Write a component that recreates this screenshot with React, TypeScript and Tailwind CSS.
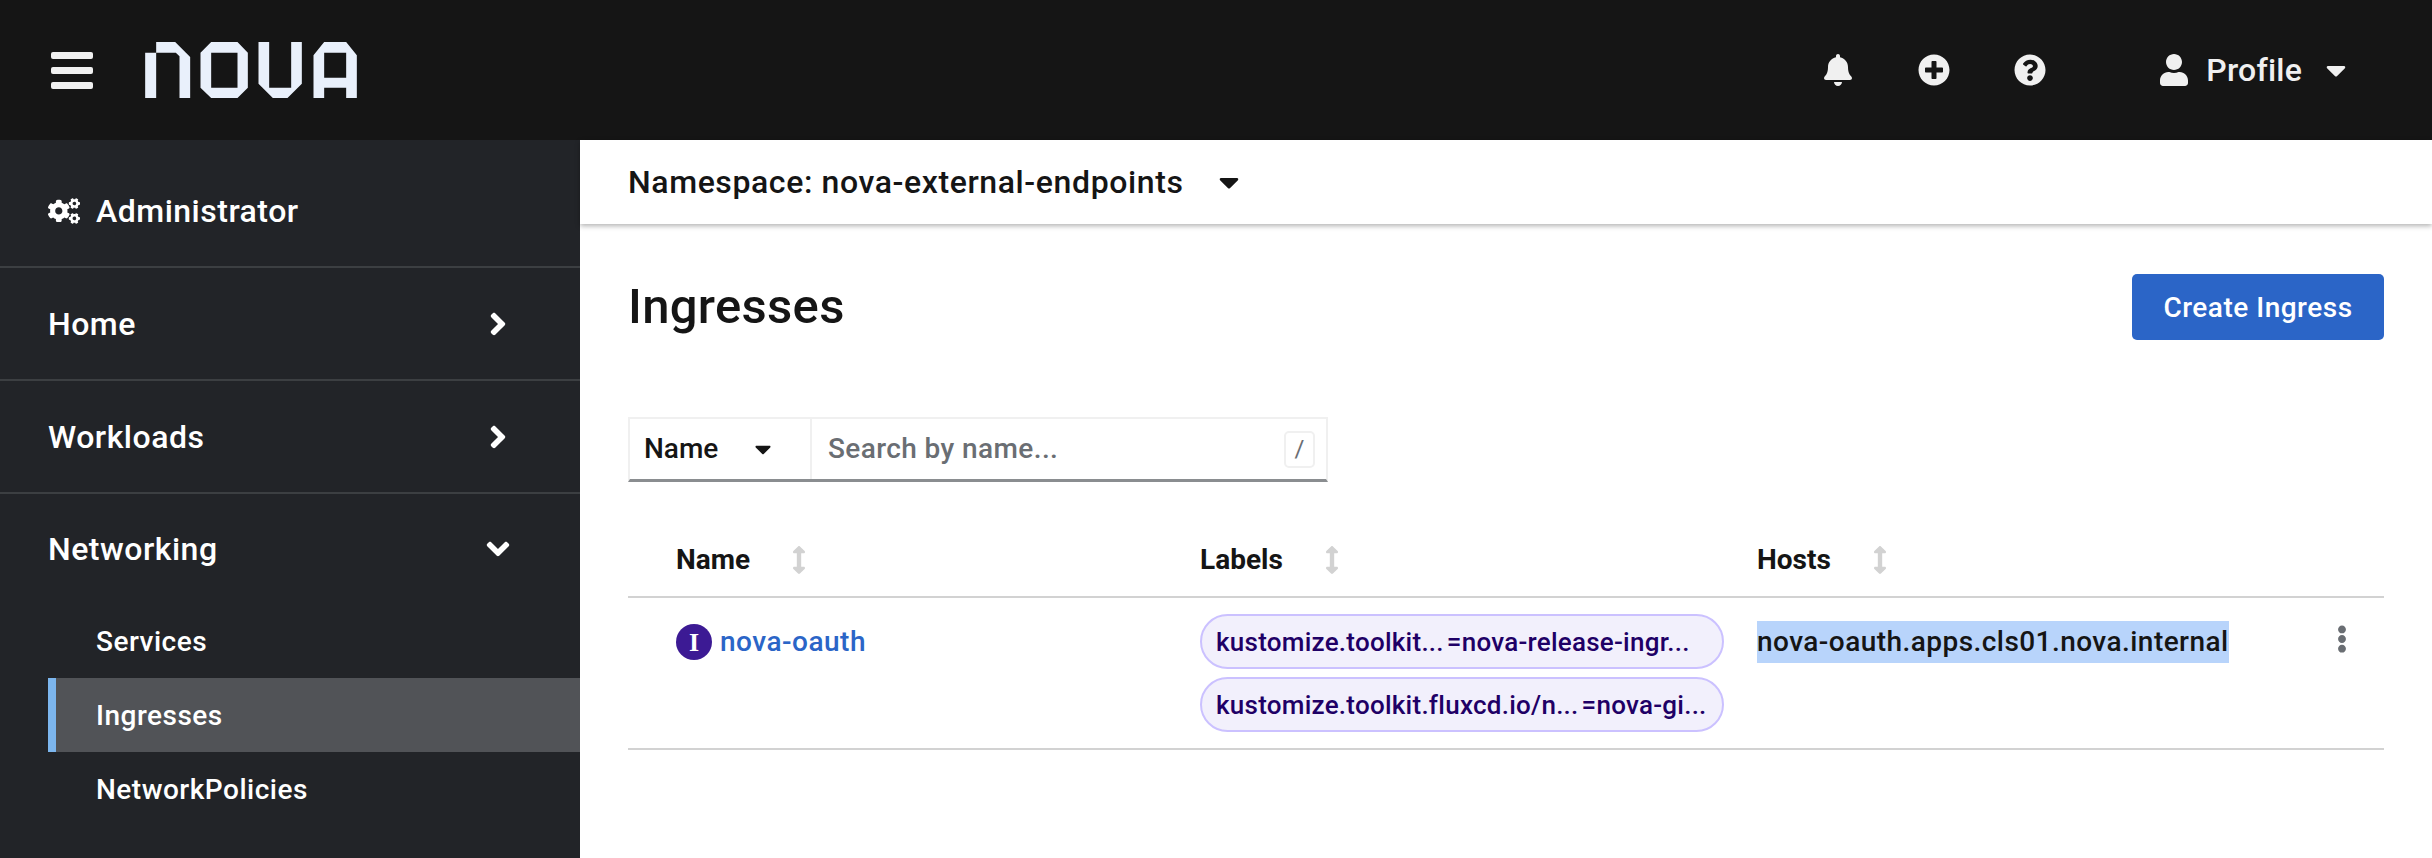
import { FaArrowsAltV, FaAngleDown, FaAngleRight, FaBell, FaCaretDown, FaCogs, FaEllipsisV, FaPlusCircle, FaQuestionCircle, FaUser } from "react-icons/fa";

const Logo = () => (
  <svg viewBox="345 65 635 168" width="212" height="56" fill="#e9f0fb" fillRule="evenodd">
    <path d="M345 97H378V65H435L480 110V233H448V108L437 97H378V233H345Z" />
    <path d="M543 65H622L653 97V202L622 233H543L511 202V97ZM543 97V202H622V97Z" />
    <path d="M685 65H717V202H783V65H815V190L772 233H728L685 190Z" />
    <path d="M882 65H948L980 105V233H948V202H882V233H850V105ZM882 97V172H948V97Z" />
  </svg>
);

const NavItem = ({ label, open }: { label: string; open?: boolean }) => (
  <div className={`flex items-center justify-between pl-[48px] pr-[64px] ${open ? "h-[110px]" : "h-[113px] border-b-2 border-[#3c3f42]"}`}>
    <span className="text-[32px] font-medium tracking-[0.5px] text-white">{label}</span>
    {open ? <FaAngleDown className="text-[36px] text-white" /> : <FaAngleRight className="text-[36px] text-white" />}
  </div>
);

const SubItem = ({ label, active }: { label: string; active?: boolean }) => (
  <div className={`ml-[48px] flex h-[74px] items-center pt-[2px] text-[28px] font-medium tracking-[0.5px] text-white ${active ? "border-l-8 border-[#7cb6ee] bg-[#515357] pl-[40px]" : "pl-[48px]"}`}>
    {label}
  </div>
);

const SortHead = ({ label }: { label: string }) => (
  <div className="flex items-center gap-[42px] text-[28px] font-bold text-[#151515]">
    <span>{label}</span>
    <FaArrowsAltV className="h-[28px] w-[14px] text-[#d2d2d2]" />
  </div>
);

const Pill = ({ left, right }: { left: string; right: string }) => (
  <div className="flex h-[55px] w-[524px] items-center gap-[3px] whitespace-nowrap rounded-[28px] border-2 border-[#cbc1ff] bg-[#f2f0fc] pl-[14px] pt-[1px] text-[26px] font-medium tracking-[0.25px] text-[#1f0066]">
    <span>{left}</span>
    <span>{right}</span>
  </div>
);

export default function App() {
  return (
    <div className="flex h-screen flex-col overflow-hidden bg-white font-[Roboto,sans-serif]">
      {/* masthead */}
      <header className="flex h-[140px] shrink-0 items-center bg-[#151515]">
        <div className="ml-[51px] flex w-[42px] flex-col gap-[8px]">
          <div className="h-[7px] rounded-[2px] bg-[#f0f0f0]" />
          <div className="h-[7px] rounded-[2px] bg-[#f0f0f0]" />
          <div className="h-[7px] rounded-[2px] bg-[#f0f0f0]" />
        </div>
        <div className="ml-[52px]">
          <Logo />
        </div>
        <div className="ml-auto flex items-center pr-[80px] text-[#f0f0f0]">
          <FaBell className="h-[32px] w-[28px]" />
          <FaPlusCircle className="ml-[66px] h-[32px] w-[32px]" />
          <FaQuestionCircle className="ml-[64px] h-[32px] w-[32px]" />
          <FaUser className="ml-[114px] h-[32px] w-[28px]" />
          <span className="ml-[18px] text-[32px] font-medium tracking-[0.2px]">Profile</span>
          <FaCaretDown className="ml-[18px] text-[32px]" />
        </div>
      </header>

      <div className="flex flex-1">
        {/* sidebar */}
        <aside className="w-[580px] shrink-0 bg-[#222428]">
          <div className="flex h-[128px] items-center border-b-2 border-[#3c3f42] pl-[48px] pt-[16px]">
            <FaCogs className="h-[26px] w-[32px] text-white" />
            <span className="ml-[16px] text-[32px] font-medium tracking-[0.5px] text-white">Administrator</span>
          </div>
          <NavItem label="Home" />
          <NavItem label="Workloads" />
          <NavItem label="Networking" open />
          <SubItem label="Services" />
          <SubItem label="Ingresses" active />
          <SubItem label="NetworkPolicies" />
        </aside>

        {/* content */}
        <main className="flex-1">
          <div className="flex h-[84px] items-center pl-[48px] shadow-[0_2px_5px_rgba(0,0,0,0.3)]">
            <span className="text-[32px] font-medium tracking-[0.6px] text-[#151515]">Namespace: nova-external-endpoints</span>
            <FaCaretDown className="ml-[30px] text-[32px] text-[#151515]" />
          </div>

          <div className="px-[48px]">
            <div className="mt-[50px] flex h-[66px] items-center justify-between">
              <h1 className="text-[49px] font-medium tracking-[0.3px] text-[#151515]">Ingresses</h1>
              <button className="flex h-[66px] w-[252px] items-center justify-center rounded-[5px] bg-[#2b65c7] pt-[2px] text-[28px] font-medium tracking-[0.5px] text-white">
                Create Ingress
              </button>
            </div>

            <div className="mt-[77px] flex h-[65px] w-[700px] border-2 border-b-[3px] border-[#f0f0f0] border-b-[#8a8d90]">
              <div className="flex w-[182px] items-center justify-between border-r-2 border-[#f0f0f0] pl-[14px] pr-[34px] text-[28px] font-medium text-[#151515]">
                <span>Name</span>
                <FaCaretDown className="text-[26px]" />
              </div>
              <div className="flex flex-1 items-center justify-between pl-[16px] pr-[11px]">
                <span className="text-[28px] font-medium tracking-[0.4px] text-[#6a6e73]">Search by name...</span>
                <span className="flex h-[37px] w-[31px] items-center justify-center rounded-[5px] border-2 border-[#f0f0f0] text-[24px] text-[#6a6e73]">/</span>
              </div>
            </div>

            <div className="mt-[41px] grid grid-cols-[572px_557px_1fr] border-b-2 border-[#d2d2d2]">
              <div className="flex h-[75px] items-center border-b-2 border-[#d2d2d2] pl-[48px]">
                <SortHead label="Name" />
              </div>
              <div className="flex h-[75px] items-center border-b-2 border-[#d2d2d2]">
                <SortHead label="Labels" />
              </div>
              <div className="flex h-[75px] items-center border-b-2 border-[#d2d2d2]">
                <SortHead label="Hosts" />
              </div>

              <div className="flex items-start pl-[48px] pt-[26px]">
                <span className="flex h-[36px] w-[36px] items-center justify-center rounded-full bg-[#3c1a94] font-['Liberation_Serif'] text-[26px] font-bold text-white">I</span>
                <a className="ml-[8px] text-[28px] leading-[36px] font-medium tracking-[0.5px] text-[#2b65c7]">nova-oauth</a>
              </div>
              <div className="flex flex-col gap-[8px] pb-[16px] pt-[16px]">
                <Pill left="kustomize.toolkit..." right="=nova-release-ingr..." />
                <Pill left="kustomize.toolkit.fluxcd.io/n..." right="=nova-gi..." />
              </div>
              <div className="flex items-start justify-between pr-[36px] pt-[23px]">
                <span className="bg-[#b8d4fb] text-[28px] leading-[42px] font-medium tracking-[0.45px] text-[#151515]">nova-oauth.apps.cls01.nova.internal</span>
                <FaEllipsisV className="mt-[4px] h-[28px] w-[12px] text-[#6a6e73]" />
              </div>
            </div>
          </div>
        </main>
      </div>
    </div>
  );
}
